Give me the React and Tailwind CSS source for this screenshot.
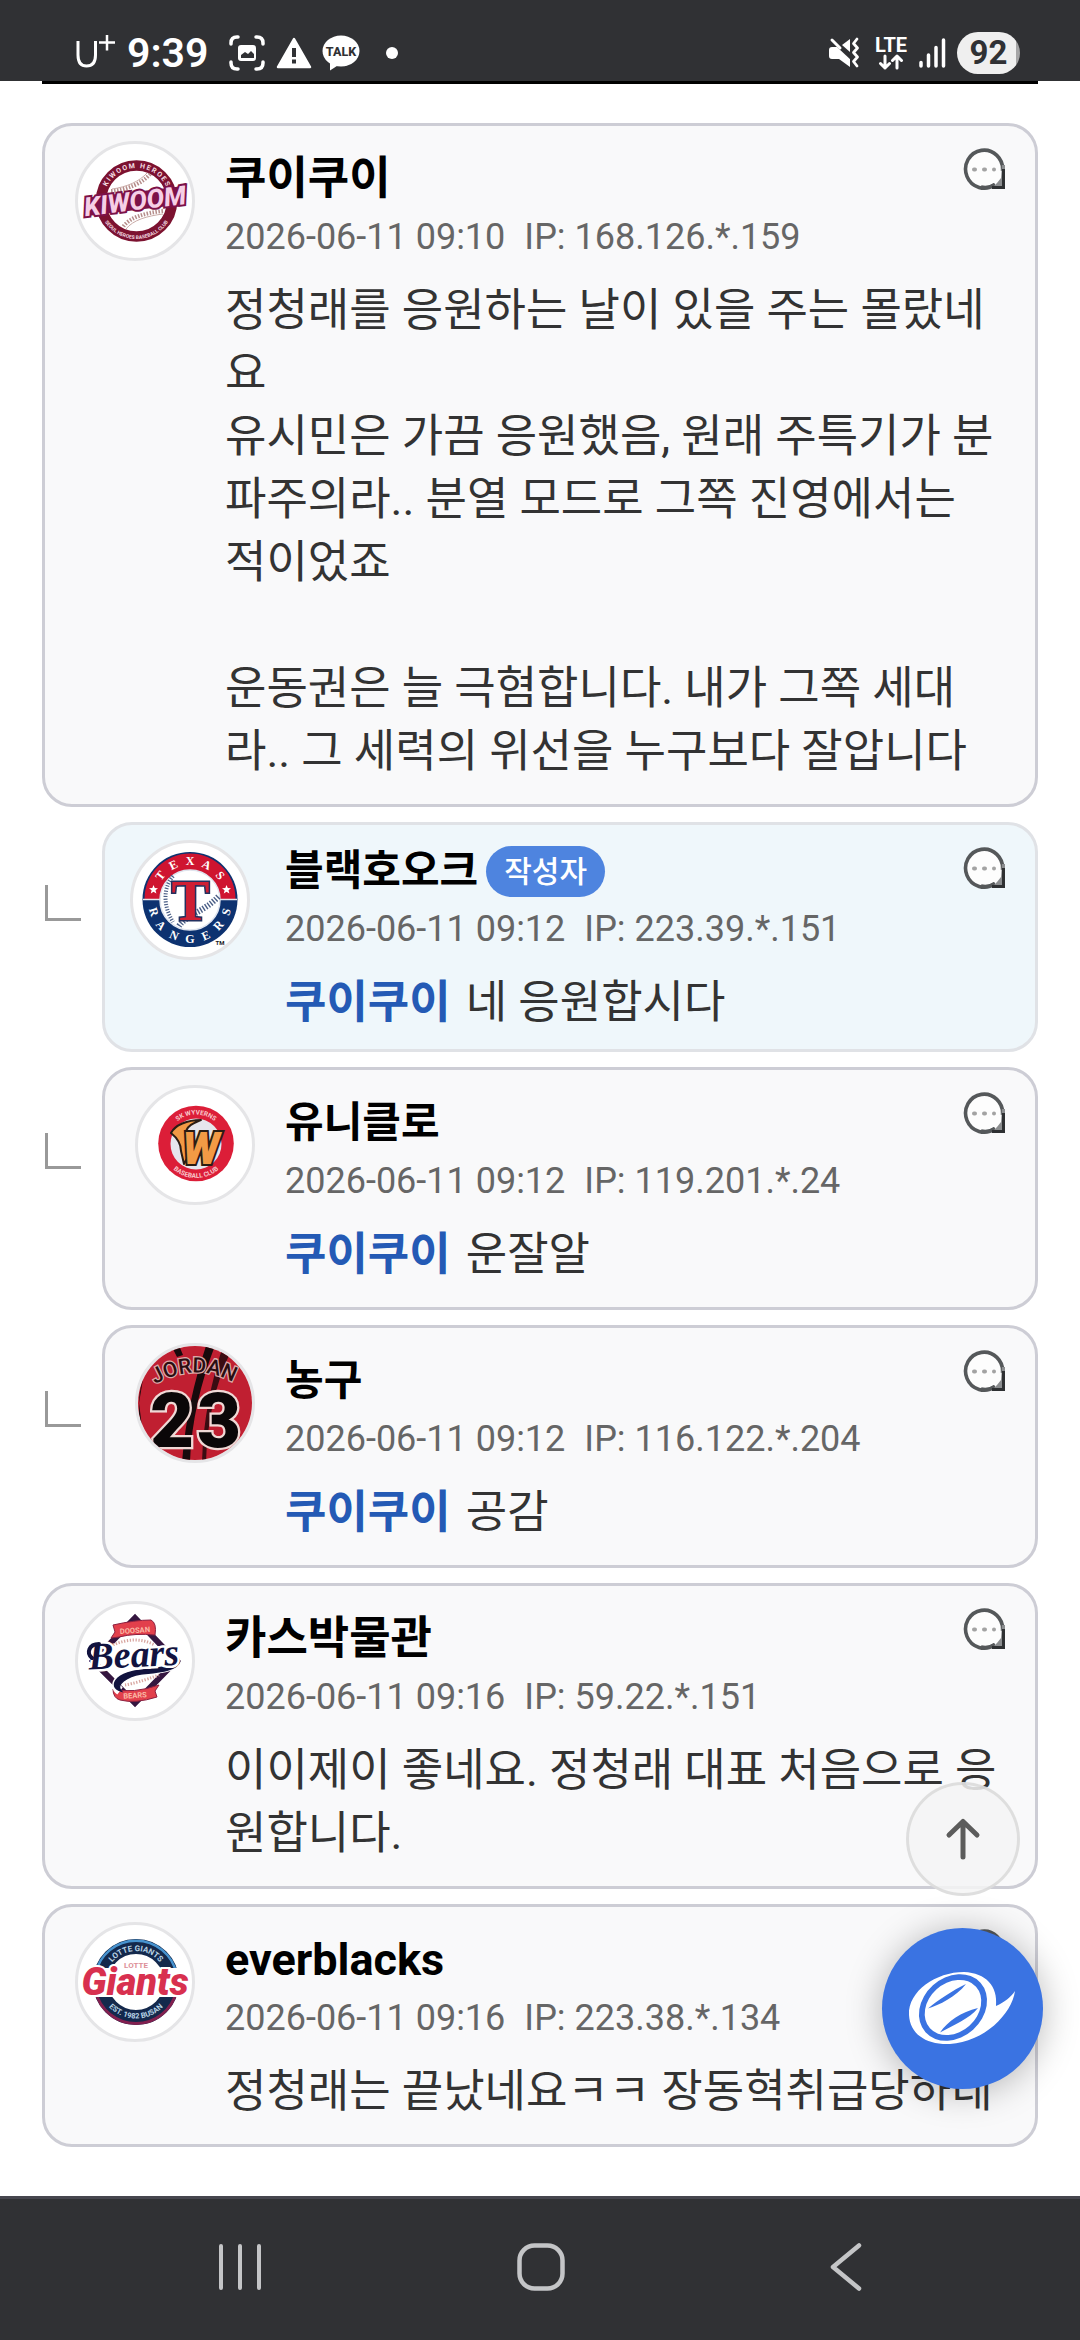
import React, { useId } from "react";

const NAVY = "#12133f";

function ArcText({ r, cx, cy, bottom, size, fill, spread, weight = 700, children, family = "Roboto" }) {
  const id = useId();
  const d = bottom
    ? `M${cx - r} ${cy} A${r} ${r} 0 0 0 ${cx + r} ${cy}`
    : `M${cx - r} ${cy} A${r} ${r} 0 0 1 ${cx + r} ${cy}`;
  const letters = spread ? children.split("").join("\u2009") : children;
  return (
    <>
      <path id={id} d={d} fill="none" />
      <text fontSize={size} fill={fill} fontWeight={weight} fontFamily={family} textAnchor="middle">
        <textPath href={`#${id}`} startOffset="50%">
          {letters}
        </textPath>
      </text>
    </>
  );
}

function KiwoomLogo() {
  return (
    <svg viewBox="0 0 120 120" className="size-full" aria-hidden="true">
      <circle cx="61.5" cy="60" r="35.5" fill="#fff" stroke="#7c1230" strokeWidth="10.5" />
      <path d="M75 33 C68 42 52 49 36 50 M88 70 C70 72 55 76 48 86" fill="none" stroke="#b58d8a" strokeWidth="4" strokeDasharray="1.5 1.5" />
      <path d="M72 32 C65 40 52 46 37 48 M88 73 C72 75 58 79 51 88" fill="none" stroke="#c9aaa6" strokeWidth="1" />
      <ArcText r={33} cx={61.5} cy={60} size={7} fill="#f3dce2" spread>KIWOOM HEROES</ArcText>
      <ArcText r={38} cx={61.5} cy={60} size={5} fill="#f3dce2" bottom>SEOUL HEROES BASEBALL CLUB</ArcText>
      <g transform="rotate(-7 60 60)">
        <path d="M9 69 L15 51 H112 L107 69Z" fill="#7c1248" />
        <text x="60" y="69" fontSize="26" fontWeight="800" fontStyle="italic" fontFamily="Roboto" textAnchor="middle" fill="#f6cfe6" stroke="#7c1248" strokeWidth="4" paintOrder="stroke" strokeLinejoin="miter">KIWOOM</text>
      </g>
    </svg>
  );
}

function RangersLogo() {
  return (
    <svg viewBox="0 0 120 120" className="size-full" aria-hidden="true">
      <circle cx="60" cy="59.5" r="47.5" fill="#0d3270" />
      <path d="M14.5 59 A45.5 45.5 0 0 1 105.500 59Z" fill="#cf1430" />
      <path d="M13 59.500 H107" stroke="#e8e8ee" strokeWidth="1.500" />
      <circle cx="60" cy="60" r="30" fill="#fff" stroke="#dfe4ee" strokeWidth="1.500" />
      <path d="M43 36 C33 48 33 66 43 82" fill="none" stroke="#4a5e86" strokeWidth="4" strokeDasharray="1.200 1.500" />
      <path d="M49 86 C56 75 74 72 89 56" fill="none" stroke="#4a5e86" strokeWidth="6" strokeDasharray="1.400 1.600" />
      <text x="60.500" y="80" fontSize="57" fontWeight="700" fontFamily="Liberation Serif" textAnchor="middle" fill="#cf1f33" stroke="#23305f" strokeWidth="3" paintOrder="stroke">T</text>
      <g fill="#fff" transform="translate(0 .5)">
        <path d="M23.500 44.500 l1.300 3 3.200.2-2.500 2.100.9 3.200-2.900-1.700-2.700 1.700.8-3.200-2.600-2.100 3.300-.2z" />
        <path d="M96.500 44.500 l1.300 3 3.200.2-2.500 2.100.9 3.200-2.900-1.700-2.700 1.700.8-3.200-2.600-2.100 3.300-.2z" />
      </g>
      <g fill="#fff" fontFamily="Liberation Serif" fontWeight="700" fontSize="12" textAnchor="middle">
        <text transform="translate(33.500 38) rotate(-52)">T</text>
        <text transform="translate(45 28.500) rotate(-26)">E</text>
        <text transform="translate(60 24.800)">X</text>
        <text transform="translate(75 28.500) rotate(26)">A</text>
        <text transform="translate(87 38) rotate(52)">S</text>
        <text transform="translate(20 73) rotate(72)">R</text>
        <text transform="translate(28 88) rotate(48)">A</text>
        <text transform="translate(42.500 99) rotate(24)">N</text>
        <text transform="translate(60 103)">G</text>
        <text transform="translate(77.500 99) rotate(-24)">E</text>
        <text transform="translate(91.500 88) rotate(-48)">R</text>
        <text transform="translate(100 73) rotate(-72)">S</text>
      </g>
      <text x="90" y="105" fontSize="6" fontWeight="700" fontFamily="Roboto" textAnchor="middle" fill="#222">TM</text>
    </svg>
  );
}

function WyvernsLogo() {
  return (
    <svg viewBox="0 0 120 120" className="size-full" aria-hidden="true">
      <circle cx="61" cy="58.500" r="37.800" fill="#dc1e38" />
      <circle cx="61" cy="59" r="25.500" fill="#e6e6ed" />
      <ArcText r={29} cx={61} cy={58.5} size={6.5} fill="#f8c9cd">SK WYVERNS</ArcText>
      <ArcText r={34.5} cx={61} cy={58.5} size={6.5} fill="#f8c9cd" bottom>BASEBALL CLUB</ArcText>
      <path d="M66 35 C52 35 40 40 36 48 C41 52 46 57 46 66 L49 79 L56 66 L56 50 L51 46 C53 40 59 38 66 35Z" fill="#f29a45" stroke="#2b1d14" strokeWidth="2" strokeLinejoin="round" />
      <text x="66" y="79" fontSize="44" fontWeight="900" fontStyle="italic" fontFamily="Roboto" textAnchor="middle" fill="#f29a45" stroke="#2b1d14" strokeWidth="4" paintOrder="stroke" strokeLinejoin="miter">W</text>
    </svg>
  );
}

function JordanLogo() {
  const id = useId();
  return (
    <svg viewBox="0 0 120 120" className="size-full" aria-hidden="true">
      <rect width="120" height="120" fill="#c01f31" />
      <path d="M35 0 L42 14 L48 12 L43 0Z M8 36 C2 55 3 75 8 92 L4 60Z" fill="#180a0c" />
      <path d="M72 0 H81 C66 38 56 80 55 120 H47 C50 78 59 38 72 0Z" fill="#180a0c" />
      <path d="M89 0 L95 10 C80 42 72 80 71 120 H67 C68 78 76 38 89 0Z" fill="#3a0c12" />
      <path id={id} d="M17 43 Q60 17 101 41" fill="none" />
      <text fontSize="21" fontWeight="500" fontFamily="Roboto" textAnchor="middle" fill="#2a0e12" stroke="#dba9a8" strokeWidth="2.600" paintOrder="stroke">
        <textPath href={`#${id}`} startOffset="50%">JORDAN</textPath>
      </text>
      <g fontSize="76" fontWeight="900" fontFamily="Roboto" textAnchor="middle" fill="#0b0708" stroke="#f0d9d6" strokeWidth="4.500" paintOrder="stroke" strokeLinejoin="miter">
        <text x="37 84" y="104">23</text>
      </g>
    </svg>
  );
}

function BearsLogo() {
  return (
    <svg viewBox="0 0 120 120" className="size-full" aria-hidden="true">
      <path d="M60 17 L101 60 L60 102 L18 60Z" fill="#fff" stroke="#351640" strokeWidth="6" />
      <path d="M38 44 Q60 34 80 44 M50 84 Q62 82 84 74" fill="none" stroke="#d8a6a0" strokeWidth="3" strokeDasharray="1.300 1.600" />
      <path d="M38 24 Q60 19 76 19 Q82 22 80 34 Q60 32 44 36 L36 37 L40 31Z" fill="#e2404c" stroke="#8c2140" strokeWidth="1" />
      <path d="M38 88 Q58 93 84 84 L80 90 L82 96 Q60 103 45 99 Q38 97 38 88Z" fill="#e2404c" stroke="#8c2140" strokeWidth="1" />
      <text x="60" y="32" fontSize="7.500" fontWeight="700" fontFamily="Roboto" textAnchor="middle" fill="#fbb9a5" transform="rotate(-4 60 30)">DOOSAN</text>
      <text x="60" y="97" fontSize="7.500" fontWeight="700" fontFamily="Roboto" textAnchor="middle" fill="#fbb9a5" transform="rotate(-4 60 95)">BEARS</text>
      <path d="M103 60 C96 72 58 66 45 78 C40 83 41 87 45 90" fill="none" stroke="#fff" strokeWidth="9" />
      <path d="M103 57 C98 72 58 64 43 77 C37 83 39 88 46 90 C40 84 52 75 66 73 C84 71 102 70 105 60Z" fill={NAVY} stroke={NAVY} strokeWidth="1.500" />
      <g transform="rotate(-3 60 60)">
        <text x="59" y="66" fontSize="38" fontWeight="700" fontStyle="italic" fontFamily="Liberation Serif" textAnchor="middle" fill={NAVY} stroke="#fff" strokeWidth="5" paintOrder="stroke">Bears</text>
      </g>
      <path d="M24 43 C14 43 11 52 17 57" fill="none" stroke={NAVY} strokeWidth="4" strokeLinecap="round" />
    </svg>
  );
}

function GiantsLogo() {
  return (
    <svg viewBox="0 0 120 120" className="size-full" aria-hidden="true">
      <circle cx="61" cy="60" r="35.500" fill="#fff" stroke="#14294c" strokeWidth="15" />
      <path d="M20.500 52 A41.300 41.300 0 0 1 101.500 52" fill="none" stroke="#4793cf" strokeWidth="2.500" />
      <path d="M20.500 69 A41.500 41.500 0 0 0 101.500 69" fill="none" stroke="#82204f" strokeWidth="3" />
      <path d="M12 46 H110 L106 75 H8Z" fill="#fff" />
      <ArcText r={31} cx={61} cy={60} size={8} fill="#b9d4e6">LOTTE GIANTS</ArcText>
      <ArcText r={37.5} cx={61} cy={59} size={7.5} fill="#b9d4e6" bottom>EST. 1982 BUSAN</ArcText>
      <text x="61" y="46" fontSize="8" fontWeight="700" fontFamily="Roboto" textAnchor="middle" fill="#dd8f98">LOTTE</text>
      <text x="60" y="73" fontSize="38" fontWeight="900" fontStyle="italic" fontFamily="Roboto" textAnchor="middle" fill="#d8304f" stroke="#fff" strokeWidth="4" paintOrder="stroke">Giants</text>
    </svg>
  );
}

function ReplyIcon() {
  return (
    <svg viewBox="0 0 42 44" className="h-[44px] w-[42px]" fill="none" aria-hidden="true">
      <circle cx="21.500" cy="21.500" r="19" fill="#fdfdfd" />
      <path d="M39 28 V40 H29" fill="#fdfdfd" />
      <path d="M32 37.500 A18.500 19 0 1 1 39.500 24" stroke="#55585a" strokeWidth="3.600" />
      <path d="M32 37.500 A18.500 19 0 0 1 18 40" stroke="#55585a" strokeWidth="3.600" />
      <path d="M39 18 L42 18 V42 H28 L34 36 L38 31Z" fill="#8b8d8f" />
      <path d="M40.500 22 V40.500 H29" stroke="#2e3032" strokeWidth="3" />
      <g fill="#a3a3a3">
        <rect x="9" y="20.500" width="5" height="4" rx="2" />
        <rect x="19" y="20.500" width="5" height="4" rx="2" />
        <rect x="29" y="20.500" width="4" height="4" rx="2" />
      </g>
    </svg>
  );
}

const comments = [
  {
    id: 1,
    name: "쿠이쿠이",
    time: "2026-06-11 09:10",
    ip: "168.126.*.159",
    Logo: KiwoomLogo,
    text: "정청래를 응원하는 날이 있을 주는 몰랐네요\n유시민은 가끔 응원했음, 원래 주특기가 분파주의라.. 분열 모드로 그쪽 진영에서는 적이었죠\n\n운동권은 늘 극혐합니다. 내가 그쪽 세대라.. 그 세력의 위선을 누구보다 잘압니다",
  },
  {
    id: 2,
    name: "블랙호오크",
    author: true,
    reply: true,
    time: "2026-06-11 09:12",
    ip: "223.39.*.151",
    Logo: RangersLogo,
    mention: "쿠이쿠이",
    text: "네 응원합시다",
  },
  {
    id: 3,
    name: "유니클로",
    reply: true,
    time: "2026-06-11 09:12",
    ip: "119.201.*.24",
    Logo: WyvernsLogo,
    mention: "쿠이쿠이",
    text: "운잘알",
  },
  {
    id: 4,
    name: "농구",
    reply: true,
    time: "2026-06-11 09:12",
    ip: "116.122.*.204",
    Logo: JordanLogo,
    mention: "쿠이쿠이",
    text: "공감",
  },
  {
    id: 5,
    name: "카스박물관",
    time: "2026-06-11 09:16",
    ip: "59.22.*.151",
    Logo: BearsLogo,
    text: "이이제이 좋네요. 정청래 대표 처음으로 응원합니다.",
  },
  {
    id: 6,
    name: "everblacks",
    time: "2026-06-11 09:16",
    ip: "223.38.*.134",
    Logo: GiantsLogo,
    text: "정청래는 끝났네요ㅋㅋ 장동혁취급당하네",
  },
];

function Comment({ name, author, reply, time, ip, Logo, mention, text }) {
  return (
    <li className="flex">
      {reply && (
        <span aria-hidden="true" className={`ml-[3px] mr-[21px] size-9 shrink-0 border-b-3 border-l-3 border-[#999] ${author ? "mt-[63px]" : "mt-[66px]"}`} />
      )}
      <article
        className={`flex min-w-0 flex-1 items-start rounded-[30px] border-3 pr-[30px] pt-[15px] ${
          author ? "gap-[35px] border-[#e0e2e6] bg-[#eff7fb] pb-[15px] pl-[25px]" : "gap-[30px] border-[#cdcdd5] bg-[#f9f9fa] pb-[21px] pl-[30px]"
        }`}
      >
        <div className="size-[120px] shrink-0 overflow-hidden rounded-full border-3 border-[#e5e5e7] bg-white">
          <div className="-m-[3px] size-[120px]">
            <Logo />
          </div>
        </div>
        <div className="min-w-0 flex-1">
          <header className="flex items-start justify-between">
            <div className={author ? "pt-[3px]" : "pt-[10px]"}>
              <div className="flex h-14 items-center gap-2">
                <a href="#profile" className={`font-bold leading-[58px] text-black ${reply ? "text-[42px]" : "text-[45px]"}`}>
                  {name}
                </a>
                {author && (
                  <span className="rounded-full bg-[#4e84df] px-[18px] text-[30px] font-medium leading-[51px] text-white">작성자</span>
                )}
              </div>
              <p className="mt-[6px] flex gap-[19px] text-[36px] leading-[48px] text-[#666]">
                <time>{time}</time>
                <span>IP: {ip}</span>
              </p>
            </div>
            <button type="button" aria-label="답글" className="mt-[6px] shrink-0">
              <ReplyIcon />
            </button>
          </header>
          <p className="mt-[18px] whitespace-pre-wrap break-all pr-[3px] text-[45px] leading-[63px] text-[#333]">
            {mention && (
              <>
                <a href="#mention" className="mr-1 font-bold text-[#245ab5]">{mention}</a>{" "}
              </>
            )}
            {text}
          </p>
        </div>
      </article>
    </li>
  );
}

function StatusBar() {
  return (
    <header className="sticky top-0 z-10 flex h-[81px] shrink-0 items-center justify-between bg-[#303134] pl-[75px] pr-[60px] pt-[25px] text-white">
      <div className="flex items-center">
        <svg viewBox="0 0 42 36" className="h-9 w-[42px]" fill="none" stroke="#fff" aria-label="U+">
          <path d="M3 6 V20 Q3 31 11.500 31 Q20.500 31 20.500 20 V6" strokeWidth="3" />
          <path d="M24 7.500 H40 M32 0 V15.500" strokeWidth="2.500" />
        </svg>
        <time className="ml-[10px] text-[41px] font-semibold leading-[44px]">9:39</time>
        <svg viewBox="0 0 36 36" className="ml-[21px] size-9" fill="none" stroke="#fff" strokeWidth="3.500" strokeLinecap="round" aria-hidden="true">
          <path d="M2 9 V8 Q2 2 8 2 H9 M27 2 H28 Q34 2 34 8 V9 M34 27 V28 Q34 34 28 34 H27 M9 34 H8 Q2 34 2 28 V27" />
          <rect x="9" y="10" width="18" height="16" rx="3" fill="#fff" stroke="none" />
          <path d="M12 23 V20 L16 17 L19 19 L22 16 L25 19 V23Z" fill="#303134" stroke="none" />
        </svg>
        <svg viewBox="0 0 36 32" className="ml-[11px] h-8 w-9" aria-hidden="true">
          <path d="M18 2 L34 30 H2Z" fill="#fff" stroke="#fff" strokeWidth="2.500" strokeLinejoin="round" />
          <path d="M18 11 V20 M18 22.500 V26.500" stroke="#303134" strokeWidth="4" />
        </svg>
        <svg viewBox="0 0 38 36" className="ml-[10px] h-9 w-[38px]" aria-hidden="true">
          <ellipse cx="19" cy="16" rx="18.500" ry="15.500" fill="#fff" />
          <path d="M8 25 L8 35.500 L18 29Z" fill="#fff" />
          <text x="19" y="20.500" fontSize="12.500" fontWeight="800" fontFamily="Roboto" textAnchor="middle" fill="#303134">TALK</text>
        </svg>
        <span className="ml-[26px] size-3 rounded-full bg-white" />
      </div>
      <div className="flex items-center">
        <svg viewBox="0 0 32 32" className="size-8" aria-hidden="true">
          <path d="M1 13 Q1 10 4 10 H11 L22 20 V30 L11 22 H4 Q1 22 1 19Z M14 8 L22 2 V15Z" fill="#fff" />
          <path d="M3 2.500 L24 22" stroke="#303134" strokeWidth="3" />
          <path d="M4 3 L12 11" stroke="#fff" strokeWidth="3" strokeLinecap="round" />
          <path d="M29 2 L25.500 6.500 L29.500 11 L25.500 15.500 L29.500 20 L25.500 24.500 L29 29" fill="none" stroke="#fff" strokeWidth="2.800" strokeLinejoin="round" strokeLinecap="round" />
        </svg>
        <div className="ml-[14px] flex w-[34px] flex-col items-center">
          <span className="text-[20px] font-bold leading-[18px]">LTE</span>
          <svg viewBox="0 0 26 16" className="h-4 w-[26px]" fill="none" stroke="#fff" strokeWidth="3" strokeLinecap="round" strokeLinejoin="round" aria-hidden="true">
            <path d="M7 2 V14 M2.500 9.500 L7 14 L11.500 9.500 M19 14 V2 M14.500 6.500 L19 2 L23.500 6.500" />
          </svg>
        </div>
        <svg viewBox="0 0 28 30" className="ml-[10px] h-[30px] w-7" stroke="#fff" strokeWidth="3.500" strokeLinecap="round" aria-hidden="true">
          <path d="M3 24.500 V28 M10.500 17 V28 M18 9.500 V28 M25.500 2 V28" />
        </svg>
        <span className="ml-[11px] h-[42px] w-[63px] rounded-full bg-[linear-gradient(to_right,#efefef_93%,#a5a5a6_93%)] text-center text-[33px] font-bold leading-[42px] text-[#303134]">92</span>
      </div>
    </header>
  );
}

function NavBar() {
  return (
    <nav className="sticky bottom-0 z-10 grid h-36 shrink-0 grid-cols-3 items-center justify-items-center border-t-3 border-[#46464e] bg-[#303134] px-[88px] pb-[6px] text-[#c4c5c7]">
      <button type="button" aria-label="최근 앱">
        <svg viewBox="0 0 48 50" className="h-[50px] w-12" fill="none" stroke="currentColor" strokeWidth="4" strokeLinecap="round">
          <path d="M6 4 V46 M25 4 V46 M44 4 V46" />
        </svg>
      </button>
      <button type="button" aria-label="홈">
        <svg viewBox="0 0 50 50" className="size-[50px]" fill="none" stroke="currentColor" strokeWidth="4.500">
          <rect x="4.500" y="3.500" width="43" height="43" rx="15" />
        </svg>
      </button>
      <button type="button" aria-label="뒤로">
        <svg viewBox="0 0 50 50" className="size-[50px]" fill="none" stroke="currentColor" strokeWidth="4.500" strokeLinecap="round" strokeLinejoin="round">
          <path d="M43 3.500 L17 25 L43 46.500" />
        </svg>
      </button>
    </nav>
  );
}

export default function App() {
  return (
    <div className="flex min-h-screen flex-col bg-white font-['Roboto','Noto_Sans_CJK_KR',sans-serif]">
      <StatusBar />
      <main className="flex-1 px-[42px] pb-[48px]">
        <ul className="flex flex-col gap-[15px] border-t-3 border-black pt-[39px]">
          {comments.map((c) => (
            <Comment key={c.id} {...c} />
          ))}
        </ul>
      </main>
      <NavBar />

      <button
        type="button"
        aria-label="맨 위로"
        className="fixed bottom-[444px] right-[60px] z-20 flex size-[114px] items-center justify-center rounded-full border-3 border-[#cfcfcf]/60 bg-[#f4f4f4]/85"
      >
        <svg viewBox="0 0 36 42" className="h-[42px] w-9" fill="none" stroke="#5c5c5c" strokeWidth="5" strokeLinecap="round" strokeLinejoin="round" aria-hidden="true">
          <path d="M18 39 V3.500 M4 17 L18 3.500 L32 17" />
        </svg>
      </button>
      <button
        type="button"
        aria-label="메뉴"
        className="fixed bottom-[251px] right-[37px] z-20 size-[161px] rounded-full bg-[#3a73e2] shadow-[0_3px_36px_rgba(0,0,0,0.28)]"
      >
        <svg viewBox="0 0 161 161" className="size-full" aria-hidden="true">
          <path d="M27 87 C26 63 54 44 82 44 C104 45 116 58 114 78 C123 74 129 69 133 63 C130 86 102 114 68 116 C44 117 28 106 27 87Z" fill="#fff" />
          <g transform="translate(71 79.500) rotate(-42)">
            <ellipse rx="37" ry="30" fill="#3a73e2" />
            <ellipse rx="31" ry="24.500" fill="#fff" />
          </g>
          <path d="M46 80.500 C57 77 74 69 84 56 C71 62 55 73 46 80.500Z M58 104.500 C66 93 79 84 96 80 C87 91 72 97 58 104.500Z" fill="#3a73e2" />
        </svg>
      </button>
    </div>
  );
}
